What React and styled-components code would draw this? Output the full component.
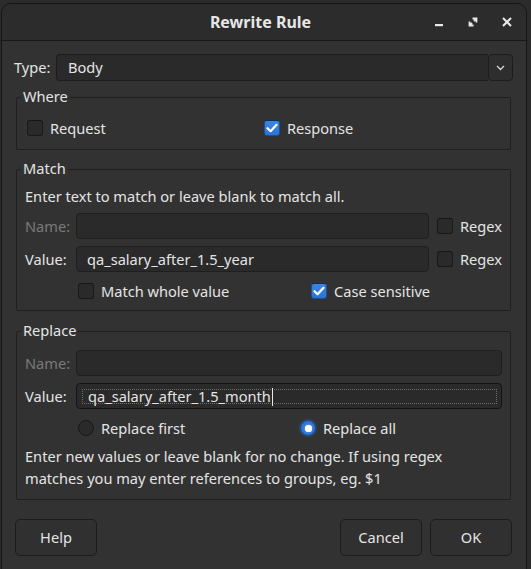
import React from 'react';
import styled, { createGlobalStyle } from 'styled-components';

const Global = createGlobalStyle`
  html, body { margin: 0; padding: 0; background: #2b2b2b; }
  body {
    font-family: "Noto Sans", "Open Sans", sans-serif;
    font-size: 14.6px;
    color: #e4e4e4;
    overflow: hidden;
  }
  * { box-sizing: border-box; }
`;

const Window = styled.div`
  margin: 3px 0 0 1px;
  width: 526px;
  height: 566px;
  background: #323232;
  border: 1px solid #151515;
  border-bottom: none;
  border-radius: 10px 10px 0 0;
  overflow: hidden;
  display: flex;
  flex-direction: column;
`;

const TitleBar = styled.div`
  height: 37px;
  flex: none;
  background: #2c2c2c;
  border-bottom: 1px solid #171717;
  display: grid;
  grid-template-columns: 1fr auto 1fr;
  align-items: center;
  padding-right: 7px;
`;

const Title = styled.div`
  grid-column: 2;
  font-weight: 700;
  font-size: 16px;
  color: #e6e6e6;
  margin-top: -1px;
`;

const Controls = styled.div`
  grid-column: 3;
  justify-self: end;
  display: flex;
  gap: 10px;
`;

const CtrlButton = styled.div`
  width: 24px;
  height: 24px;
  display: flex;
  align-items: center;
  justify-content: center;
  color: #e8e8e8;
`;

const Body = styled.div`
  flex: 1;
  display: flex;
  flex-direction: column;
  padding: 12px 13px 0 12px;
`;

const TypeRow = styled.div`
  display: flex;
  align-items: center;
  height: 27px;
  margin-top: 1px;
  line-height: 20px;
`;

const FieldLabel = styled.div`
  width: ${p => p.$w || 'auto'};
  color: ${p => (p.$disabled ? '#7a7a7a' : '#e4e4e4')};
  white-space: nowrap;
  margin-top: -1px;
`;

const Combo = styled.div`
  flex: 1;
  display: flex;
  height: 27px;
`;

const ComboField = styled.div`
  flex: 1;
  background: #2a2a2a;
  border: 1px solid #1d1d1d;
  border-right: none;
  border-radius: 4px 0 0 4px;
  display: flex;
  align-items: center;
  padding: 0 0 1px 11px;
`;

const ComboButton = styled.div`
  width: 25px;
  background: #2e2e2e;
  border: 1px solid #1d1d1d;
  border-radius: 4px;
  display: flex;
  align-items: center;
  justify-content: center;
`;

const Group = styled.fieldset`
  margin: ${p => p.$mt}px 2px 0;
  padding: 0;
  border: 1px solid #1f1f1f;
  border-radius: 2px;
  min-width: 0;
`;

const Legend = styled.legend`
  margin-left: 4px;
  padding: 0 2px 1px;
  line-height: 19px;
  color: #e4e4e4;
`;

const GroupInner = styled.div`
  padding: ${p => p.$pad};
`;

const TwoCols = styled.div`
  display: grid;
  grid-template-columns: ${p => p.$first} 1fr;
  align-items: center;
  height: 22px;
  padding-left: ${p => p.$indent || 0}px;
`;

const CheckLabel = styled.label`
  display: flex;
  align-items: center;
  gap: 7px;
  white-space: nowrap;
  line-height: 22px;
`;

const Box = styled.span`
  width: 16px;
  height: 16px;
  flex: none;
  border-radius: 3px;
  display: flex;
  align-items: center;
  justify-content: center;
  background: ${p => (p.$on ? 'linear-gradient(#3a86e4, #2a74d4)' : '#2a2a2a')};
  border: 1px solid ${p => (p.$on ? '#1c4f95' : '#191919')};
  border-top-color: ${p => (p.$on ? '#152e50' : '#151515')};
`;

const RadioDot = styled.span`
  width: 16px;
  height: 16px;
  flex: none;
  border-radius: 50%;
  display: flex;
  align-items: center;
  justify-content: center;
  background: ${p => (p.$on ? 'radial-gradient(circle, #3f8ae6 0%, #2468c8 100%)' : '#2a2a2a')};
  border: 1px solid ${p => (p.$on ? '#1b4d94' : '#191919')};
  box-shadow: ${p => (p.$on ? '0 0 2px #2a70d0' : 'none')};
  &::after {
    content: '';
    display: ${p => (p.$on ? 'block' : 'none')};
    width: 7px;
    height: 7px;
    border-radius: 50%;
    background: #fff;
    box-shadow: 0 0 1px #fff;
  }
`;

const Form = styled.div`
  display: grid;
  grid-template-columns: 43px 1fr ${p => (p.$extra ? 'auto' : '')};
  column-gap: 8px;
  row-gap: 7px;
  align-items: center;
`;

const Note = styled.div`
  grid-column: 1 / -1;
  line-height: ${p => p.$lh || 20}px;
  margin-top: -1px;
`;

const Input = styled.div`
  height: 26px;
  background: #2a2a2a;
  border: 1px solid ${p => (p.$focus ? '#141414' : '#1f1f1f')};
  border-radius: 4px;
  display: flex;
  align-items: center;
  padding: ${p => (p.$focus ? '5px 4px 4px 5px' : '0 0 1px 10px')};
  white-space: nowrap;
`;

const FocusRect = styled.div`
  flex: 1;
  align-self: stretch;
  border: 1px dotted #6e6e6e;
  display: flex;
  align-items: center;
  padding: 0 0 1px 5px;
`;

const Caret = styled.span`
  display: inline-block;
  width: 1px;
  height: 18px;
  background: #e8e8e8;
  margin: 1px 0 0 1px;
`;

const Span = styled.div`
  grid-column: ${p => p.$col};
  margin-top: ${p => p.$mt || 0}px;
`;

const ButtonRow = styled.div`
  display: flex;
  margin-top: 19px;
  padding: 0 1px 0 1px;
  gap: 8px;
`;

const PushButton = styled.div`
  width: 82px;
  height: 37px;
  background: #303030;
  border: 1px solid #1c1c1c;
  border-radius: 5px;
  display: flex;
  align-items: center;
  justify-content: center;
  padding-bottom: 2px;
  margin-left: ${p => (p.$push ? 'auto' : '0')};
`;

const Check = ({ on, children }) => (
  <CheckLabel>
    <Box $on={on}>
      {on && (
        <svg width="12" height="10" viewBox="0 0 12 10">
          <path d="M1.5 5.2 L4.6 8.2 L10.5 1.8" fill="none" stroke="#fff" strokeWidth="2.2" strokeLinecap="round" strokeLinejoin="round" />
        </svg>
      )}
    </Box>
    {children}
  </CheckLabel>
);

const Radio = ({ on, children }) => (
  <CheckLabel>
    <RadioDot $on={on} />
    {children}
  </CheckLabel>
);

export default function App() {
  return (
    <>
      <Global />
      <Window>
        <TitleBar>
          <Title>Rewrite Rule</Title>
          <Controls>
            <CtrlButton>
              <svg width="10" height="10" viewBox="0 0 10 10">
                <rect x="1" y="7" width="8" height="2.2" fill="#e8e8e8" />
              </svg>
            </CtrlButton>
            <CtrlButton>
              <svg width="10" height="10" viewBox="0 0 10 10">
                <path d="M4.5 1.5 H8.5 V5.5 M8.5 1.5 L6 4" fill="none" stroke="#e8e8e8" strokeWidth="1.8" />
                <path d="M1.5 4.5 V8.5 H5.5 M1.5 8.5 L4 6" fill="none" stroke="#e8e8e8" strokeWidth="1.8" />
              </svg>
            </CtrlButton>
            <CtrlButton>
              <svg width="10" height="10" viewBox="0 0 10 10">
                <path d="M1 1 L9 9 M9 1 L1 9" fill="none" stroke="#e8e8e8" strokeWidth="2" />
              </svg>
            </CtrlButton>
          </Controls>
        </TitleBar>
        <Body>
          <TypeRow>
            <FieldLabel $w="42px">Type:</FieldLabel>
            <Combo>
              <ComboField>Body</ComboField>
              <ComboButton>
                <svg width="9" height="6" viewBox="0 0 9 6">
                  <path d="M1 1 L4.5 4.5 L8 1" fill="none" stroke="#d8d8d8" strokeWidth="1.3" />
                </svg>
              </ComboButton>
            </Combo>
          </TypeRow>

          <Group $mt={6}>
            <Legend>Where</Legend>
            <GroupInner $pad="10px 10px 10px 10px">
              <TwoCols $first="237px">
                <Check on={false}>Request</Check>
                <Check on>Response</Check>
              </TwoCols>
            </GroupInner>
          </Group>

          <Group $mt={9}>
            <Legend>Match</Legend>
            <GroupInner $pad="8px 8px 8px 8px">
              <Form $extra>
                <Note>Enter text to match or leave blank to match all.</Note>
                <FieldLabel $disabled>Name:</FieldLabel>
                <Input />
                <Check on={false}>Regex</Check>
                <FieldLabel>Value:</FieldLabel>
                <Input>qa_salary_after_1.5_year</Input>
                <Check on={false}>Regex</Check>
                <Span $col="2 / -1" $mt={1}>
                  <TwoCols $first="233px" $indent={2}>
                    <Check on={false}>Match whole value</Check>
                    <Check on>Case sensitive</Check>
                  </TwoCols>
                </Span>
              </Form>
            </GroupInner>
          </Group>

          <Group $mt={10}>
            <Legend>Replace</Legend>
            <GroupInner $pad="9px 8px 10px 8px">
              <Form>
                <FieldLabel $disabled>Name:</FieldLabel>
                <Input />
                <FieldLabel>Value:</FieldLabel>
                <Input $focus>
                  <FocusRect>
                    qa_salary_after_1.5_month<Caret />
                  </FocusRect>
                </Input>
                <Span $col="2 / -1" $mt={1}>
                  <TwoCols $first="222px" $indent={2}>
                    <Radio on={false}>Replace first</Radio>
                    <Radio on>Replace all</Radio>
                  </TwoCols>
                </Span>
                <Note $lh={22}>
                  Enter new values or leave blank for no change. If using regex
                  <br />
                  matches you may enter references to groups, eg. $1
                </Note>
              </Form>
            </GroupInner>
          </Group>

          <ButtonRow>
            <PushButton>Help</PushButton>
            <PushButton $push>Cancel</PushButton>
            <PushButton>OK</PushButton>
          </ButtonRow>
        </Body>
      </Window>
    </>
  );
}
